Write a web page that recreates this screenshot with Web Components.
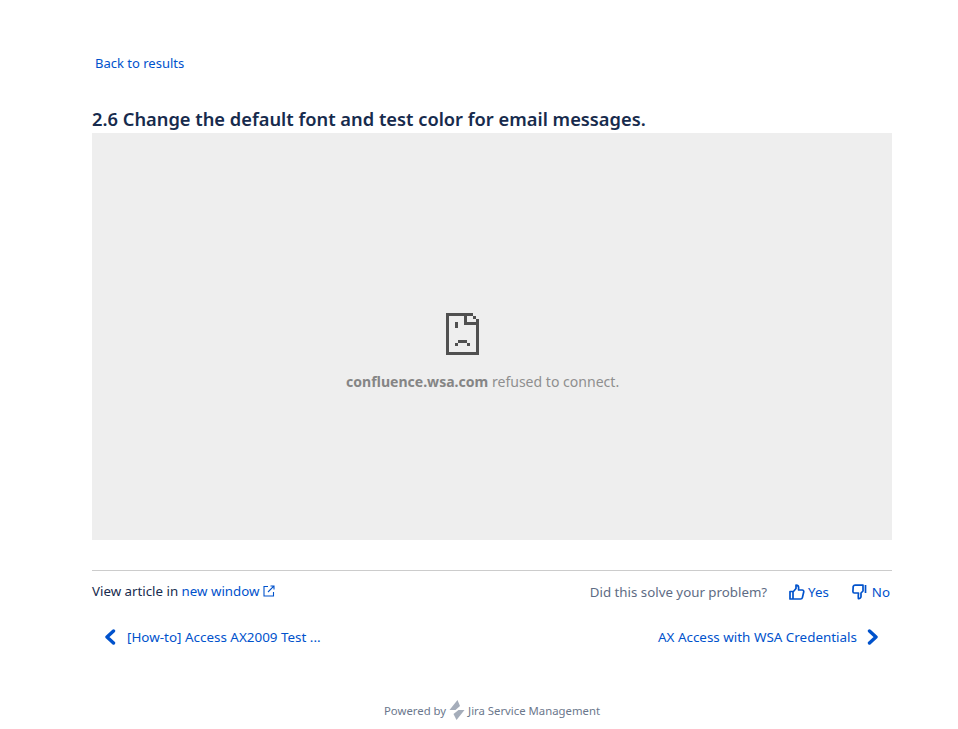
<!DOCTYPE html>
<html><head><meta charset="utf-8"><style>
html,body{margin:0;padding:0;background:#fff}
body{font-family:"Noto Sans","Open Sans",sans-serif;color:#172b4d}
</style></head><body>
<jsm-article-page></jsm-article-page>
<template id="t-page"><style>
:host{display:block;height:729px;overflow:hidden;box-sizing:border-box;padding:53px 66px 0 92px;font-size:13.3px}
a{color:#0052cc;text-decoration:none}
.back{display:block;margin-left:3px;line-height:20px;height:20px;font-size:13px}
h1{margin:34px 0 0;font-size:18.3px;font-weight:600;line-height:24px;height:26px;color:#172b4d;white-space:nowrap}
</style>
<a class="back" href="#">Back to results</a>
<h1>2.6 Change the default font and test color for email messages.</h1>
<jsm-error-frame></jsm-error-frame>
<jsm-article-footer></jsm-article-footer>
<jsm-powered></jsm-powered>
</template>
<template id="t-frame"><style>
:host{display:flex;flex-direction:column;align-items:flex-start;height:407px;background:#eee;box-sizing:border-box;padding:180px 0 0 254px}
svg{display:block;margin-left:100px}
p{margin:17px 0 0;font-size:14.05px;line-height:20px;color:#8f8f8f;white-space:nowrap}
b{font-weight:700;color:#858585}
</style>
<svg width="33" height="42" viewBox="0 0 11 14" fill="#505050" shape-rendering="crispEdges">
<rect x="0" y="0" width="9" height="1"/><rect x="0" y="0" width="1" height="14"/><rect x="0" y="13" width="11" height="1"/><rect x="10" y="2" width="1" height="12"/>
<rect x="9" y="1" width="1" height="1"/><rect x="6" y="0" width="1" height="4"/><rect x="6" y="3" width="5" height="1"/>
<rect x="3" y="3" width="1" height="2"/>
<rect x="4" y="9" width="3" height="1"/><rect x="3" y="10" width="1" height="1"/><rect x="7" y="10" width="1" height="1"/>
</svg>
<p><b>confluence.wsa.com</b> refused to connect.</p>
</template>
<template id="t-footer"><style>
:host{display:block;margin-top:30px;border-top:1px solid #ccc;font-size:13.3px}
a{color:#0052cc;text-decoration:none}
.row{display:flex;justify-content:space-between;align-items:center}
.r1{height:40px}
.view{display:flex;align-items:center;white-space:pre;margin-top:-1px}
.view svg{margin-left:4px}
.fb{display:flex;align-items:center;margin-right:2px;color:#5e6c84;margin-top:1px}
.fb a{display:flex;align-items:center}
.fb .y{margin-left:22px}.fb .n{margin-left:23px}
.fb .y svg{margin-right:3px}
.fb .n svg{margin-right:4px}
.r2{height:36px;margin-top:8px;padding:0 13px 0 12px;font-size:13.43px}
.r2 a{display:flex;align-items:center;white-space:nowrap}
.r2 .p svg{margin-right:11px}
.r2 .x svg{margin-left:10px}
</style>
<div class="row r1">
<div class="view">View article in <a href="#">new window</a><svg width="12" height="12" viewBox="0 0 12 12" fill="none" stroke="#0052cc" stroke-width="1.1"><path d="M5 1.500H1v9.500h9.500V7"/><path d="M5 7 10.800 1.200M7.500 1h3.500v3.500"/></svg></div>
<div class="fb"><span>Did this solve your problem?</span>
<a class="y" href="#"><svg width="16" height="16" viewBox="0 0 16 16" fill="none" stroke="#0052cc" stroke-width="1.7" stroke-linejoin="round"><path d="M1 7.500h3v7.500H1zM4 8l3-3.500V1.200c1.600 0 2.600 1 2.600 2.400V6h3.600c1.200 0 1.800 1 1.500 2l-1.300 5.600c-.2.900-.9 1.400-1.800 1.400H4"/></svg>Yes</a>
<a class="n" href="#"><svg width="16" height="16" viewBox="0 0 16 16" fill="none" stroke="#0052cc" stroke-width="1.7" stroke-linejoin="round"><path d="M11 1.200H3C2.200 1.200 1.600 1.600 1.200 2.400L.9 7.600c0 .8.5 1.400 1.400 1.400h4.200c-.2 1.400-.3 3.200-.1 5.600 1.400.1 2.600-.6 2.600-2.100V9l2-2zM13.500 1v8"/></svg>No</a></div>
</div>
<div class="row r2">
<a class="p" href="#"><svg width="12" height="16" viewBox="0 0 12 16" fill="none" stroke="#0052cc" stroke-width="3.4" stroke-linecap="round" stroke-linejoin="round"><path d="M9.500 2 3 8l6.500 6"/></svg>[How-to] Access AX2009 Test ...</a>
<a class="x" href="#">AX Access with WSA Credentials<svg width="12" height="16" viewBox="0 0 12 16" fill="none" stroke="#0052cc" stroke-width="3.4" stroke-linecap="round" stroke-linejoin="round"><path d="M2.500 2 9 8l-6.500 6"/></svg></a>
</div>
</template>
<template id="t-powered"><style>
:host{display:flex;justify-content:center;align-items:center;margin-top:43px;font-size:11.34px;color:#6b778c;height:24px;white-space:pre}
svg{margin:0 3px}
</style>Powered by<svg width="16" height="20" viewBox="0 0 16 20" fill="#a5adba"><path d="M8.500 0 .5 10h6l4.500-4z"/><path d="M15.500 10h-6l-5 4 3 6z"/></svg>Jira Service Management</template>
<script>
function def(name,tpl){customElements.define(name,class extends HTMLElement{constructor(){super();this.attachShadow({mode:"open"}).appendChild(document.getElementById(tpl).content.cloneNode(true));}});}
def("jsm-error-frame","t-frame");def("jsm-article-footer","t-footer");def("jsm-powered","t-powered");def("jsm-article-page","t-page");
</script>
</body></html>
